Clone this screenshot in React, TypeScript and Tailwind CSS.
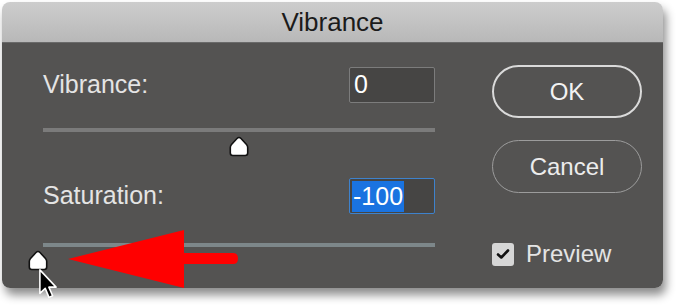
import React from "react";

function Thumb() {
  return (
    <svg width="20" height="21" viewBox="0 0 20 21">
      <path
        d="M10 1.5 Q11 1.5 12 2.5 L17.5 8.5 Q18.7 9.8 18.7 11.5 L18.7 17 Q18.7 19.5 16.2 19.5 L3.8 19.5 Q1.3 19.5 1.3 17 L1.3 11.5 Q1.3 9.8 2.5 8.5 L8 2.5 Q9 1.5 10 1.5 Z"
        fill="#ffffff"
        stroke="#111111"
        strokeWidth="1.6"
      />
    </svg>
  );
}

export default function App() {
  return (
    <div className="relative w-[678px] h-[308px] overflow-hidden bg-white pt-[2px] pl-[2px] font-['Liberation_Sans',Arial,sans-serif]">
      <div className="w-[661px] h-[286px] rounded-[8px] overflow-hidden flex flex-col shadow-[3px_7px_10px_rgba(0,0,0,0.45)]">
        <div className="h-[41px] shrink-0 bg-gradient-to-b from-[#cdcdcd] to-[#b8b8b8] flex items-center justify-center text-[26px] text-[#1b1b1b] border-b border-[#6a6a6a]">
          Vibrance
        </div>
        <div className="flex-1 bg-[#545352] flex pl-[41px] pt-[22px]">
          <div className="w-[392px] flex flex-col pt-[2px]">
            <div className="flex items-center justify-between h-[36px]">
              <span className="text-[25px] text-[#e4e4e4]">Vibrance:</span>
              <div className="w-[86px] h-[36px] bg-[#464544] border border-[#7c7c7c] rounded-[2px] flex items-center pl-[4px] text-[25px] text-white">
                0
              </div>
            </div>
            <div className="relative mt-[25px] h-[4px] bg-[#7b7b7b]">
              <div className="absolute left-[186px] top-[8px]">
                <Thumb />
              </div>
            </div>
            <div className="flex items-center justify-between h-[36px] mt-[46px]">
              <span className="text-[25px] text-[#e4e4e4]">Saturation:</span>
              <div className="w-[86px] h-[36px] bg-[#464544] border-[1.5px] border-[#3e82cc] rounded-[2px] flex items-stretch pl-[2px] pt-[2px] pb-[1px]">
                <span className="bg-[#1a73e0] text-white text-[25px] leading-none flex items-center px-[1px]">
                  -100
                </span>
              </div>
            </div>
            <div className="relative mt-[29px] h-[4px] bg-[#7d878a]">
              <div className="absolute left-[-15px] top-[7px]">
                <Thumb />
              </div>
            </div>
          </div>
          <div className="ml-[57px] flex flex-col">
            <div className="w-[150px] h-[53px] rounded-full border-2 border-[#dadada] flex items-center justify-center text-[24px] text-[#f2f2f2]">
              OK
            </div>
            <div className="mt-[22px] w-[150px] h-[53px] rounded-full border border-[#9c9c9c] flex items-center justify-center text-[24px] text-[#ececec]">
              Cancel
            </div>
            <div className="mt-[43px] flex items-center">
              <div className="w-[22px] h-[23px] rounded-[3px] bg-[#d6d6d6] flex items-center justify-center">
                <svg width="14" height="12" viewBox="0 0 14 12">
                  <path d="M2 6.5 L5.3 9.5 L12 2.5" fill="none" stroke="#111" strokeWidth="2.6" strokeLinecap="round" strokeLinejoin="round" />
                </svg>
              </div>
              <span className="ml-[12px] text-[24px] text-[#e4e4e4]">Preview</span>
            </div>
          </div>
        </div>
      </div>
      <svg className="absolute left-0 top-0" width="678" height="308" viewBox="0 0 678 308">
        <path d="M68 259 L184 230 L184 253 L233 253 Q238 253 238 258.5 Q238 264 233 264 L184 264 L184 288 Z" fill="#ff0000" />
      </svg>
      <svg className="absolute left-[38px] top-[268px]" width="22" height="32" viewBox="0 0 14 20">
        <path d="M1.2 1 L1.2 16 L4.6 12.8 L7 18.5 L9.3 17.5 L6.9 12 L11.5 12 Z" fill="#000" stroke="#fff" strokeWidth="1" strokeLinejoin="round" />
      </svg>
    </div>
  );
}
